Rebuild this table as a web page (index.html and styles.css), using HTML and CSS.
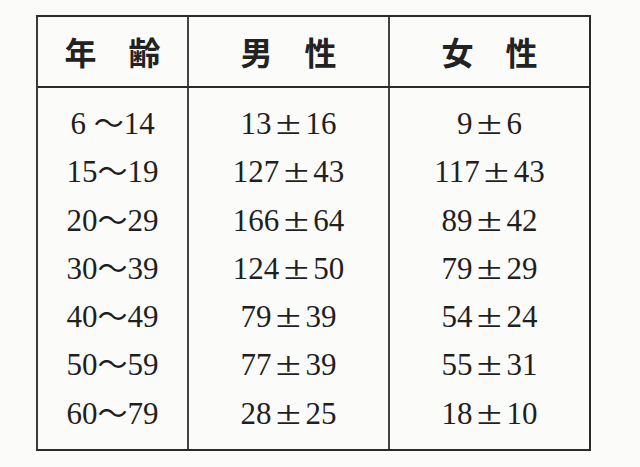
FILE: index.html
```html
<!DOCTYPE html>
<html lang="ja">
<head>
<meta charset="utf-8">
<title>年齢別</title>
<link rel="stylesheet" href="styles.css">
</head>
<body>
<div class="tbl">
  <div class="head">
    <div class="hc c1">年　齢</div>
    <div class="hc c2">男　性</div>
    <div class="hc c3">女　性</div>
  </div>
  <div class="body">
    <div class="col c1">
      <div class="r">6 <span class="t">～</span>14</div>
      <div class="r">15<span class="t">～</span>19</div>
      <div class="r">20<span class="t">～</span>29</div>
      <div class="r">30<span class="t">～</span>39</div>
      <div class="r">40<span class="t">～</span>49</div>
      <div class="r">50<span class="t">～</span>59</div>
      <div class="r">60<span class="t">～</span>79</div>
    </div>
    <div class="col c2">
      <div class="r">13<span class="pm"><span>±</span></span>16</div>
      <div class="r">127<span class="pm"><span>±</span></span>43</div>
      <div class="r">166<span class="pm"><span>±</span></span>64</div>
      <div class="r">124<span class="pm"><span>±</span></span>50</div>
      <div class="r">79<span class="pm"><span>±</span></span>39</div>
      <div class="r">77<span class="pm"><span>±</span></span>39</div>
      <div class="r">28<span class="pm"><span>±</span></span>25</div>
    </div>
    <div class="col c3">
      <div class="r">9<span class="pm"><span>±</span></span>6</div>
      <div class="r">117<span class="pm"><span>±</span></span>43</div>
      <div class="r">89<span class="pm"><span>±</span></span>42</div>
      <div class="r">79<span class="pm"><span>±</span></span>29</div>
      <div class="r">54<span class="pm"><span>±</span></span>24</div>
      <div class="r">55<span class="pm"><span>±</span></span>31</div>
      <div class="r">18<span class="pm"><span>±</span></span>10</div>
    </div>
  </div>
</div>
</body>
</html>
```
FILE: styles.css
```css
html, body {
  margin: 0;
  padding: 0;
  background: #fbfbfa;
}
body {
  width: 640px;
  height: 467px;
  overflow: hidden;
  color: #1f1f1f;
  font-family: "Liberation Serif", "Noto Sans CJK JP", serif;
}
.tbl {
  margin: 15px 0 0 36px;
  width: 555px;
  box-sizing: border-box;
  border-top: 2px solid #2a2a2a;
  border-left: 2px solid #3a3a3a;
  border-right: 2px solid #2a2a2a;
  border-bottom: 2px solid #2a2a2a;
}
.head, .body {
  display: flex;
}
.head {
  height: 71px;
  border-bottom: 2px solid #2a2a2a;
  box-sizing: border-box;
}
.c1 { width: 149px; }
.c2 { width: 201px; border-left: 2px solid #444; box-sizing: border-box; }
.c3 { width: 201px; border-left: 2px solid #444; box-sizing: border-box; }
.hc {
  font-family: "Noto Sans CJK JP", sans-serif;
  font-weight: 700;
  font-size: 32px;
  line-height: 69px;
  text-align: center;
  color: #222;
}
.col {
  padding: 12px 0 11px;
}
.r {
  font-size: 31px;
  line-height: 48.3px;
  height: 48.3px;
  text-align: center;
  white-space: nowrap;
}
.t {
  font-family: "Noto Sans CJK JP", sans-serif;
  font-weight: 400;
  font-size: 30px;
  line-height: 0;
}
.pm {
  display: inline-block;
  width: 34px;
  text-align: center;
  line-height: 1;
}
.pm span {
  display: inline-block;
  font-size: 34px;
  transform: scaleX(1.35);
}
```
